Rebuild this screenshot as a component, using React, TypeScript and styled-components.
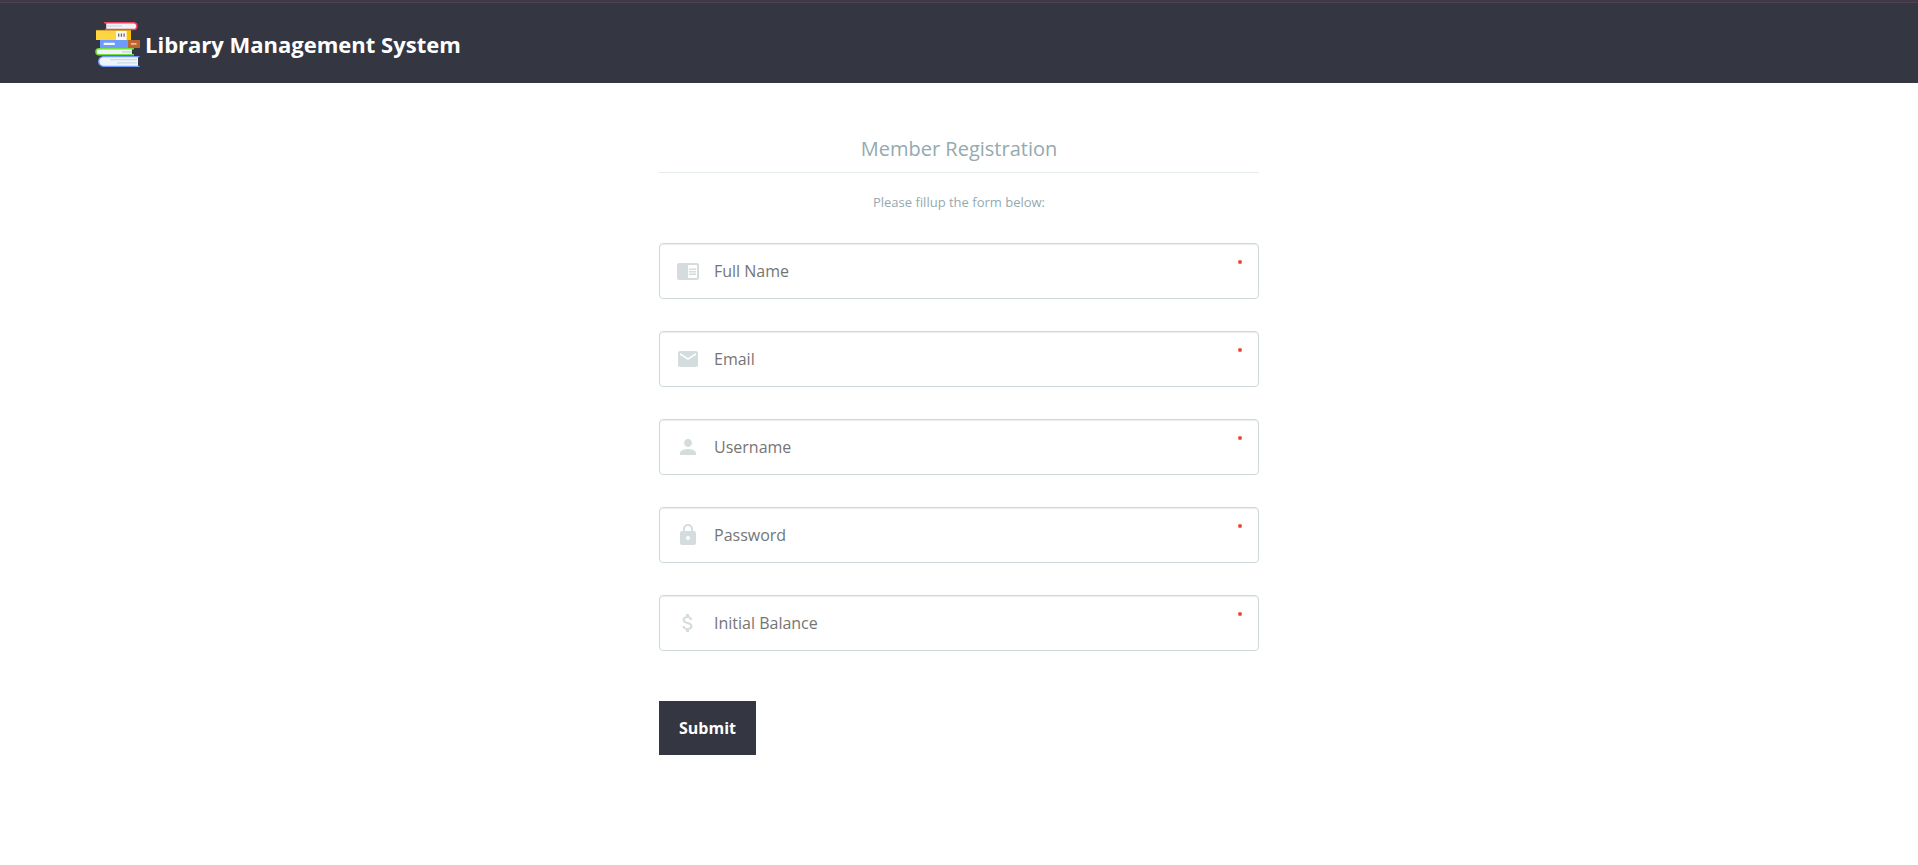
import React from "react";
import styled, { createGlobalStyle } from "styled-components";

const GlobalStyle = createGlobalStyle`
  *, *::before, *::after { box-sizing: border-box; }
  body {
    margin: 0;
    background: #fff;
    font-family: "Open Sans", sans-serif;
  }
`;

const Header = styled.header`
  display: flex;
  align-items: flex-start;
  height: 83px;
  padding: 20px 95px 0;
  background: #343642;
  border-top: 2px solid #443649;
  box-shadow: inset 0 1px 0 #4b454d;
`;

const Brand = styled.h1`
  display: flex;
  align-items: flex-start;
  gap: 5px;
  margin: 0;
  color: #fff;
  font-size: 22px;
  line-height: 30px;
  font-weight: 700;
`;

const BrandName = styled.span`
  margin-top: 7px;
`;

const Logo = styled.svg`
  display: block;
  width: 45px;
  height: 45px;
  flex: none;
`;

const Form = styled.form`
  width: 600px;
  margin: 48px auto 0;
`;

const Legend = styled.h2`
  margin: 0 0 20px;
  height: 42px;
  border-bottom: 1px solid #e6eced;
  color: #94aab0;
  font-size: 20px;
  line-height: 35px;
  font-weight: 400;
  text-align: center;
`;

const Hint = styled.p`
  margin: 0 0 31px;
  color: #94aab0;
  font-size: 13px;
  line-height: 19px;
  text-align: center;
`;

const Field = styled.label`
  display: flex;
  align-items: flex-start;
  height: 56px;
  margin-bottom: 32px;
  padding: 0 16px;
  border: 1px solid #cfd9db;
  border-radius: 4px;
  background: #fff;
  box-shadow: inset 0 1px 1px rgba(0, 0, 0, 0.08);
`;

const FieldIcon = styled.svg`
  width: 24px;
  height: 24px;
  margin-top: 15px;
  flex: none;
  fill: #d5dcde;
`;

const Input = styled.input`
  flex: 1;
  min-width: 0;
  height: 54px;
  margin-left: 14px;
  padding: 0;
  border: 0;
  outline: 0;
  background: transparent;
  color: #2b3e51;
  font: 400 16px "Open Sans", sans-serif;
  &::placeholder { color: #757575; opacity: 1; }
`;

const RequiredDot = styled.span`
  width: 4px;
  height: 4px;
  margin-top: 16px;
  border-radius: 50%;
  background: #e94b35;
`;

const Submit = styled.button`
  display: block;
  width: 97px;
  height: 54px;
  margin-top: 50px;
  padding: 0;
  border: 0;
  background: #343642;
  color: #fff;
  font: 700 16px "Open Sans", sans-serif;
`;

const fields = [
  {
    label: "Full Name",
    type: "text",
    icon: "M21 4H3c-1.1 0-2 .9-2 2v13c0 1.1.9 2 2 2h18c1.1 0 2-.9 2-2V6c0-1.1-.9-2-2-2zm0 15h-9V6h9v13zm-1-9.5h-7V11h7V9.5zm0 2.5h-7v1.500h7V12zm0 2.500h-7V16h7v-1.500z",
  },
  {
    label: "Email",
    type: "email",
    icon: "M20 4H4c-1.1 0-1.99.9-1.99 2L2 18c0 1.1.9 2 2 2h16c1.100 0 2-.9 2-2V6c0-1.100-.9-2-2-2zm0 4l-8 5-8-5V6l8 5 8-5v2z",
  },
  {
    label: "Username",
    type: "text",
    icon: "M12 12c2.210 0 4-1.790 4-4s-1.790-4-4-4-4 1.790-4 4 1.790 4 4 4zm0 2c-2.670 0-8 1.340-8 4v2h16v-2c0-2.660-5.330-4-8-4z",
  },
  {
    label: "Password",
    type: "password",
    icon: "M18 8h-1V6c0-2.760-2.240-5-5-5S7 3.240 7 6v2H6c-1.100 0-2 .9-2 2v10c0 1.100.9 2 2 2h12c1.100 0 2-.9 2-2V10c0-1.100-.9-2-2-2zm-6 9c-1.100 0-2-.9-2-2s.9-2 2-2 2 .9 2 2-.9 2-2 2zm3.100-9H8.900V6c0-1.710 1.390-3.100 3.100-3.100s3.100 1.390 3.100 3.100v2z",
  },
  {
    label: "Initial Balance",
    type: "text",
    icon: "M11.800 10.900c-2.270-.59-3-1.200-3-2.150 0-1.090 1.010-1.850 2.700-1.850 1.780 0 2.440.85 2.500 2.100h2.210c-.07-1.720-1.120-3.300-3.210-3.810V3h-3v2.160c-1.940.42-3.500 1.680-3.500 3.610 0 2.310 1.910 3.460 4.700 4.130 2.500.6 3 1.480 3 2.410 0 .69-.49 1.790-2.700 1.790-2.060 0-2.870-.92-2.980-2.100h-2.200c.12 2.190 1.760 3.420 3.680 3.830V21h3v-2.150c1.950-.37 3.500-1.500 3.500-3.550 0-2.840-2.430-3.810-4.700-4.400z",
  },
];

function BooksLogo() {
  return (
    <Logo viewBox="0 0 45 45" aria-hidden="true">
      <path d="M11.200.8H38.700a3.400 3.400 0 0 1 0 6.800H11.200z" fill="#eff3fa" />
      <path d="M9 .8H38.500a3.300 3.300 0 0 1 0 6.700H10" fill="none" stroke="#f2435c" strokeWidth="1.500" />
      <path d="M11.500 4h15.500" stroke="#c6d7e5" />
      <path d="M1 8.300h32v9.700H1z" fill="#ffd641" />
      <path d="M32 8.300h4v9.700h-4z" fill="#fbc000" />
      <path d="M1 8.400h34.700" stroke="#d9a72b" strokeWidth=".8" />
      <path d="M21 9h10.500v9H21z" fill="#fff8ee" />
      <path d="M23.700 11.500v3.300M26.400 11.500v3.300M29.100 11.500v3.300" stroke="#606b7f" strokeWidth="1.300" />
      <path d="M5 18h28v8H5z" fill="#6d9bff" />
      <path d="M33 18h12v8H33z" fill="#bb652f" />
      <rect x="8.500" y="20.700" width="11.500" height="2.400" rx="1" fill="#f5f8ff" />
      <path d="M36 21.900h5.500" stroke="#f0cfb5" strokeWidth="1.500" />
      <path d="M37 26.700H4.300a3 3 0 0 0 0 6H37z" fill="#eff3fa" />
      <path d="M39 26.700H4a3.050 3.050 0 0 0 0 6.100h35" fill="none" stroke="#73df3c" strokeWidth="1.400" />
      <path d="M27 29.900h10" stroke="#c6d7e5" strokeWidth="1.400" />
      <path d="M43 34.700H8.500a4.700 4.700 0 0 0 0 9.400H43z" fill="#f0f4fb" />
      <path d="M44.500 34.600H8.500a4.850 4.850 0 0 0 0 9.700h36" fill="none" stroke="#6d9bff" strokeWidth="1.300" />
      <path d="M15 37.700h27M22 40.900h20" stroke="#c9dae7" strokeWidth="1.300" />
    </Logo>
  );
}

export default function App() {
  return (
    <>
      <GlobalStyle />
      <Header>
        <Brand>
          <BooksLogo />
          <BrandName>Library Management System</BrandName>
        </Brand>
      </Header>
      <main>
        <Form onSubmit={(event) => event.preventDefault()}>
          <Legend>Member Registration</Legend>
          <Hint>Please fillup the form below:</Hint>
          {fields.map((field) => (
            <Field key={field.label}>
              <FieldIcon viewBox="0 0 24 24" aria-hidden="true">
                <path d={field.icon} />
              </FieldIcon>
              <Input type={field.type} placeholder={field.label} />
              <RequiredDot />
            </Field>
          ))}
          <Submit type="submit">Submit</Submit>
        </Form>
      </main>
    </>
  );
}
